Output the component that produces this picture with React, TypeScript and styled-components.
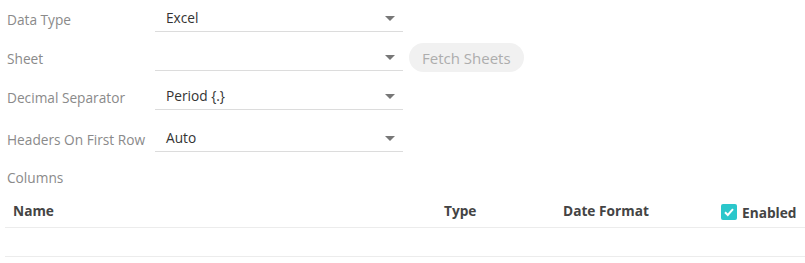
import React from "react";
import styled, { createGlobalStyle } from "styled-components";

const GlobalStyle = createGlobalStyle`
  html, body {
    margin: 0;
    padding: 0;
    background: #fff;
    font-family: "Open Sans", "Noto Sans", sans-serif;
  }
`;

const Page = styled.div`
  width: 805px;
  height: 263px;
  overflow: hidden;
  box-sizing: border-box;
`;

const Form = styled.div`
  padding: 1px 0 0 7px;
  display: flex;
  flex-direction: column;
`;

const FieldRow = styled.div<{ $h: number }>`
  display: flex;
  align-items: flex-start;
  height: ${(p) => p.$h}px;
`;

const Label = styled.div`
  width: 148px;
  height: 31px;
  display: flex;
  align-items: flex-end;
  padding-bottom: 3px;
  box-sizing: border-box;
  font-size: 13.7px;
  color: #8a8a8a;
  white-space: nowrap;
`;

const SelectBox = styled.div`
  width: 248px;
  height: 31px;
  box-sizing: border-box;
  border-bottom: 1px solid #dcdcdc;
  display: flex;
  align-items: center;
  justify-content: space-between;
  padding: 3px 8px 0 11px;
  font-size: 13.7px;
  color: #333;
`;

const Caret = styled.span`
  width: 0;
  height: 0;
  margin-top: 1px;
  border-left: 5px solid transparent;
  border-right: 5px solid transparent;
  border-top: 5px solid #777;
`;

const PillButton = styled.button`
  margin-left: 6px;
  margin-top: 3px;
  height: 29px;
  padding: 0 13px;
  border: none;
  border-radius: 15px;
  background: #f1f1f1;
  color: #adadad;
  font-family: inherit;
  font-size: 15px;
`;

const SectionTitle = styled.div`
  padding-left: 7px;
  margin-top: 8px;
  font-size: 13.7px;
  color: #8a8a8a;
  height: 20px;
  line-height: 20px;
`;

const Table = styled.div`
  margin: 6px 0 0 5px;
`;

const HeaderRow = styled.div`
  display: grid;
  grid-template-columns: 431px 119px 158px 1fr;
  height: 34px;
  box-sizing: border-box;
  align-items: center;
  border-bottom: 1px solid #ececec;
  padding-left: 8px;
  font-size: 13.7px;
  font-weight: 700;
  color: #444;
`;

const EmptyRow = styled.div`
  height: 29px;
  box-sizing: border-box;
  border-bottom: 1px solid #ececec;
`;

const CheckCell = styled.div`
  display: flex;
  align-items: center;
  gap: 5px;
  padding-top: 3px;
`;

const CheckBox = styled.span`
  width: 16px;
  height: 16px;
  border-radius: 2px;
  background: #2bc7cb;
  display: flex;
  align-items: center;
  justify-content: center;
`;

const fields = [
  { label: "Data Type", value: "Excel", h: 39 },
  { label: "Sheet", value: "", h: 39, fetch: true },
  { label: "Decimal Separator", value: "Period {.}", h: 42 },
  { label: "Headers On First Row", value: "Auto", h: 39 },
];

export default function App() {
  return (
    <Page>
      <GlobalStyle />
      <Form>
        {fields.map((f) => (
          <FieldRow key={f.label} $h={f.h}>
            <Label>{f.label}</Label>
            <SelectBox>
              <span>{f.value}</span>
              <Caret />
            </SelectBox>
            {f.fetch && <PillButton>Fetch Sheets</PillButton>}
          </FieldRow>
        ))}
      </Form>
      <SectionTitle>Columns</SectionTitle>
      <Table>
        <HeaderRow>
          <span>Name</span>
          <span>Type</span>
          <span>Date Format</span>
          <CheckCell>
            <CheckBox>
              <svg width="12" height="12" viewBox="0 0 12 12">
                <path d="M2 6.2 L4.8 9 L10 3.2" fill="none" stroke="#fff" strokeWidth="2" />
              </svg>
            </CheckBox>
            <span>Enabled</span>
          </CheckCell>
        </HeaderRow>
        <EmptyRow />
      </Table>
    </Page>
  );
}
